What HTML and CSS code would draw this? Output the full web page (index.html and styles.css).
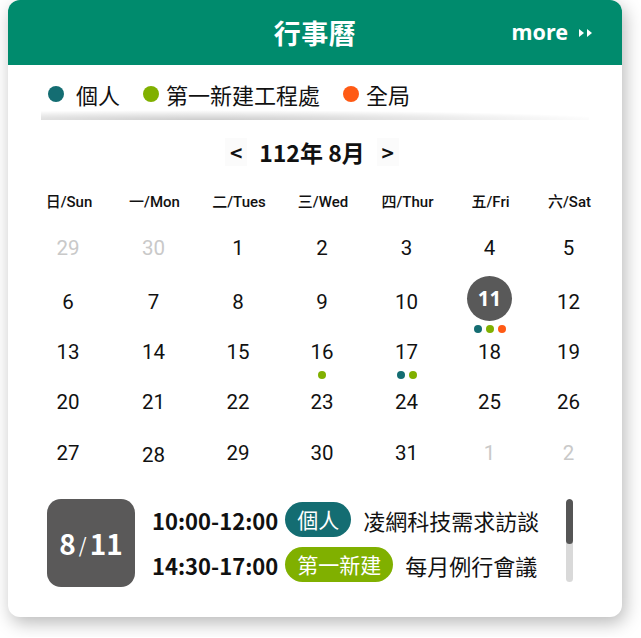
FILE: index.html
```html
<!DOCTYPE html>
<html lang="zh-Hant">
<head>
<meta charset="utf-8">
<title>行事曆</title>
<link rel="stylesheet" href="styles.css">
</head>
<body>
<div class="page">
  <div class="card">
    <div class="header">
      <div></div>
      <h1 class="title">行事曆</h1>
      <a class="more">more
        <svg class="more-icon" width="15" height="10" viewBox="0 0 15 10"><polygon points="1,1 6,5 1,9" fill="#fff"/><polygon points="9,1 14,5 9,9" fill="#fff"/></svg>
      </a>
    </div>
    <div class="legend">
      <span class="legend-item"><i class="dot big teal"></i><span class="legend-text first">個人</span></span>
      <span class="legend-item"><i class="dot big green"></i><span class="legend-text">第一新建工程處</span></span>
      <span class="legend-item"><i class="dot big orange"></i><span class="legend-text">全局</span></span>
    </div>
    <div class="legend-shadow"></div>

    <div class="nav">
      <span class="nav-btn">&lt;</span>
      <span class="nav-title">112年 8月</span>
      <span class="nav-btn">&gt;</span>
    </div>

    <div class="weekdays">
      <span>日/Sun</span><span>一/Mon</span><span>二/Tues</span><span>三/Wed</span><span>四/Thur</span><span>五/Fri</span><span>六/Sat</span>
    </div>

    <div class="days">
      <div class="day"><span class="num muted">29</span></div>
      <div class="day"><span class="num muted">30</span></div>
      <div class="day"><span class="num">1</span></div>
      <div class="day"><span class="num">2</span></div>
      <div class="day"><span class="num">3</span></div>
      <div class="day"><span class="num">4</span></div>
      <div class="day"><span class="num">5</span></div>

      <div class="day"><span class="num">6</span></div>
      <div class="day"><span class="num">7</span></div>
      <div class="day"><span class="num">8</span></div>
      <div class="day"><span class="num">9</span></div>
      <div class="day"><span class="num">10</span></div>
      <div class="day"><span class="num sel">11</span><span class="dots"><i class="dot teal"></i><i class="dot green"></i><i class="dot orange"></i></span></div>
      <div class="day"><span class="num">12</span></div>

      <div class="day"><span class="num">13</span></div>
      <div class="day"><span class="num">14</span></div>
      <div class="day"><span class="num">15</span></div>
      <div class="day"><span class="num">16</span><span class="dots"><i class="dot green"></i></span></div>
      <div class="day"><span class="num">17</span><span class="dots"><i class="dot teal"></i><i class="dot green"></i></span></div>
      <div class="day"><span class="num">18</span></div>
      <div class="day"><span class="num">19</span></div>

      <div class="day"><span class="num">20</span></div>
      <div class="day"><span class="num">21</span></div>
      <div class="day"><span class="num">22</span></div>
      <div class="day"><span class="num">23</span></div>
      <div class="day"><span class="num">24</span></div>
      <div class="day"><span class="num">25</span></div>
      <div class="day"><span class="num">26</span></div>

      <div class="day"><span class="num">27</span></div>
      <div class="day"><span class="num low">28</span></div>
      <div class="day"><span class="num">29</span></div>
      <div class="day"><span class="num">30</span></div>
      <div class="day"><span class="num">31</span></div>
      <div class="day"><span class="num muted">1</span></div>
      <div class="day"><span class="num muted">2</span></div>
    </div>

    <div class="events">
      <div class="date-box"><span class="db-num">8</span><span class="db-slash">/</span><span class="db-num">11</span></div>
      <div class="event-list">
        <div class="event"><span class="time">10:00-12:00</span><span class="pill teal">個人</span><span class="event-title">凌網科技需求訪談</span></div>
        <div class="event"><span class="time">14:30-17:00</span><span class="pill green">第一新建</span><span class="event-title">每月例行會議</span></div>
      </div>
      <div class="scrollbar"><div class="thumb"></div></div>
    </div>
  </div>
</div>
</body>
</html>
```

FILE: styles.css
```css
* { box-sizing: border-box; }
body {
  margin: 0;
  background: #ffffff;
  font-family: "Noto Sans CJK TC", "Noto Sans", sans-serif;
  color: #111;
}
.page {
  padding: 0 19px 20px 8px;
}
.card {
  width: 614px;
  background: #fff;
  border-radius: 12px;
  overflow: hidden;
  box-shadow: 3px 6px 18px rgba(0,0,0,0.28);
  padding-bottom: 30px;
}
.header {
  height: 65px;
  background: #008b6d;
  display: grid;
  grid-template-columns: 1fr auto 1fr;
  align-items: center;
}
.title {
  margin: 0;
  color: #fff;
  font-size: 27px;
  font-weight: 700;
  line-height: 1;
  letter-spacing: 0.5px;
}
.more {
  justify-self: end;
  padding-right: 29px;
  color: #fff;
  font-family: "Noto Sans", sans-serif;
  font-weight: 700;
  font-size: 21.5px;
  display: flex;
  align-items: center;
  gap: 10px;
  margin-top: -2px;
}
.more-icon { display: block; margin-top: 2px; }

.legend {
  display: flex;
  align-items: center;
  padding: 13px 0 0 40px;
  height: 45px;
  gap: 23px;
  font-size: 22px;
  line-height: 30px;
}
.legend-item {
  display: flex;
  align-items: center;
  gap: 7px;
}
.legend-text.first { margin-left: 5px; }
.dot {
  display: inline-block;
  width: 8px;
  height: 8px;
  border-radius: 50%;
}
.dot.big { width: 16px; height: 16px; }
.teal { background: #146d72; }
.green { background: #80b000; }
.orange { background: #ff5a14; }

.legend-shadow {
  margin: 0 33px 0 33px;
  height: 10px;
  background: radial-gradient(ellipse 75% 100% at 30% 100%, rgba(0,0,0,0.2), rgba(0,0,0,0) 100%);
}

.nav {
  margin-top: 18px;
  height: 28px;
  display: flex;
  justify-content: center;
  align-items: center;
  gap: 12px;
  font-weight: 700;
  font-size: 23px;
  margin-left: -6px;
}
.nav-btn {
  width: 22px;
  height: 28px;
  background: #fbfbfb;
  display: flex;
  align-items: center;
  justify-content: center;
  font-size: 21px;
}
.nav-title { line-height: 28px; }

.weekdays {
  margin: 26px 0 0 18px;
  display: grid;
  grid-template-columns: 86px 85px 84px 84px 85px 81px 77px;
  font-family: "Roboto", "Noto Sans CJK TC", sans-serif;
  font-size: 15px;
  font-weight: 500;
  line-height: 20px;
  text-align: center;
}

.days {
  margin: 21px 0 0 17px;
  display: grid;
  grid-template-columns: 86px 85px 84px 84px 85px 81px 77px;
  grid-template-rows: 54px 50px 50px 51px 30px;
  font-family: "Roboto", "Noto Sans", sans-serif;
  font-size: 20.5px;
}
.day {
  display: flex;
  flex-direction: column;
  align-items: center;
}
.num {
  line-height: 30px;
  height: 30px;
  color: #111;
}
.num.muted { color: #c9c9c9; }
.num.low { margin-top: 2px; }
.num.sel {
  width: 45px;
  height: 45px;
  line-height: 45px;
  margin-top: -11px;
  border-radius: 50%;
  background: #595959;
  color: #fff;
  font-weight: 700;
  text-align: center;
  font-family: "Noto Sans", sans-serif;
}
.dots {
  display: flex;
  gap: 4px;
  margin-top: 4px;
}

.events {
  margin-top: 31px;
  padding: 0 49px 0 39px;
  display: flex;
  align-items: flex-start;
}
.date-box {
  width: 88px;
  height: 88px;
  border-radius: 14px;
  background: #5a5959;
  color: #fff;
  display: flex;
  align-items: center;
  justify-content: center;
  font-weight: 700;
  flex: none;
}
.db-num { font-size: 28px; }
.db-slash { font-size: 20px; font-weight: 400; margin: 2px 3px 0; }
.event-list {
  flex: 1;
  margin-left: 17px;
  padding-top: 3px;
  display: flex;
  flex-direction: column;
  gap: 10px;
}
.event {
  display: flex;
  align-items: center;
  height: 35px;
  white-space: nowrap;
}
.time {
  font-weight: 700;
  font-size: 22px;
  margin-right: 7px;
}
.pill {
  height: 35px;
  line-height: 35px;
  padding: 0 12px;
  border-radius: 18px;
  color: #fff;
  font-size: 21px;
  margin-right: 12px;
}
.event-title { font-size: 22px; }
.scrollbar {
  width: 7px;
  height: 83px;
  border-radius: 4px;
  background: #d9d9d9;
  flex: none;
  overflow: hidden;
}
.thumb {
  height: 45px;
  background: #555;
  border-radius: 4px;
}
```
